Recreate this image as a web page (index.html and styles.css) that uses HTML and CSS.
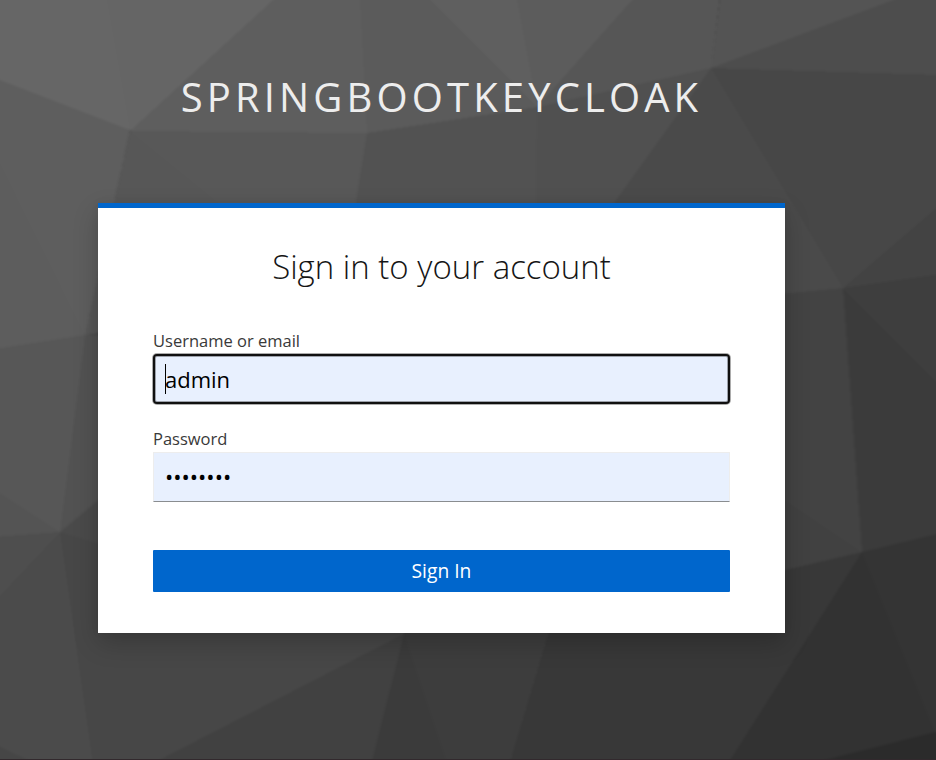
FILE: index.html
```html
<!DOCTYPE html>
<html lang="en">
<head>
<meta charset="utf-8">
<title>Sign in to SpringBootKeycloak</title>
<link rel="stylesheet" href="styles.css">
</head>
<body>
<svg class="backdrop" viewBox="0 0 936 760" preserveAspectRatio="none" aria-hidden="true">
  <rect width="936" height="760" fill="#484848"/>
  <g class="facets">
  <!-- upper row -->
  <path fill="#656565" d="M106 -5H300L134 134L130 130Z"/>
  <path fill="#666" d="M0 -5H106L130 130L0 80H-5V-5Z"/>
  <path fill="#5e5e5e" d="M273 0L278 -5H360L367 133L130 131Z"/>
  <path fill="#5b5b5b" d="M360 0V-5H425L430 0L537 107L367 133Z"/>
  <path fill="#5f5f5f" d="M430 0L425 -5H517L537 107Z"/>
  <path fill="#5c5c5c" d="M517 0V-5H637L632 0L537 107Z"/>
  <path fill="#565656" d="M632 0L637 -5H720L711 68L537 107Z"/>
  <path fill="#545454" d="M720 0V-5H906L893 0L711 68Z"/>
  <path fill="#4d4d4d" d="M893 0L906 -5H941V75L711 68Z"/>
  <path fill="#474747" d="M711 68L941 75V204L843 288Z"/>
  <path fill="#4a4a4a" d="M711 68L843 288L785 294H540L614 203Z"/>
  <path fill="#505050" d="M537 107L711 68L614 203L560 280H534Z"/>
  <path fill="#525252" d="M367 133L537 107L534 300H340Z"/>
  <path fill="#585858" d="M130 131L367 133L340 300L215 200Z"/>
  <path fill="#575757" d="M130 131L215 200L340 300L85 335Z"/>
  <!-- left side -->
  <path fill="#5e5e5e" d="M-5 78L0 80L130 130L85 335L-5 153Z"/>
  <path fill="#5d5d5d" d="M-5 153L85 335L-5 349Z"/>
  <path fill="#575757" d="M-5 349L85 335L60 532L-5 490Z"/>
  <path fill="#525252" d="M85 335H120V482L60 532Z"/>
  <path fill="#545454" d="M-5 490L60 532L-5 537Z"/>
  <path fill="#4e4e4e" d="M-5 537L60 532L-5 601Z"/>
  <path fill="#4b4b4b" d="M-5 601L60 532L93 765H38L-5 744Z"/>
  <path fill="#464646" d="M-5 744L38 765H-5Z"/>
  <path fill="#4a4a4a" d="M60 532L120 482V552Z"/>
  <path fill="#474747" d="M60 532L404 634L150 765H93Z"/>
  <!-- right side -->
  <path fill="#434343" d="M843 288L941 204V274Z"/>
  <path fill="#3e3e3e" d="M843 288L941 274V387Z"/>
  <path fill="#3b3b3b" d="M843 288L941 387V533L862 552Z"/>
  <path fill="#434343" d="M780 294L843 288L862 552L780 497Z"/>
  <path fill="#414141" d="M780 497L862 552L780 572Z"/>
  <path fill="#343434" d="M862 552L941 533V731L935 732Z"/>
  <path fill="#323232" d="M862 552L935 732L805 765H727Z"/>
  <path fill="#2b2b2b" d="M805 765L935 732L941 731V765Z"/>
  <!-- lower row -->
  <path fill="#414141" d="M150 765L404 634L371 765Z"/>
  <path fill="#3b3b3b" d="M404 634L371 765H448Z"/>
  <path fill="#3d3d3d" d="M404 634V620H552L509 765H448Z"/>
  <path fill="#383838" d="M570 560L785 570L862 552L727 765H509Z"/>
  </g>
  <path fill="#32292d" d="M0 759H936V760H0Z"/>
</svg>
<div class="page">
  <header class="realm">SpringBootKeycloak</header>
  <main class="card">
    <h1 class="title">Sign in to your account</h1>
    <form class="form">
      <label class="label" for="username">Username or email</label>
      <div class="field">
        <input class="input focused" id="username" type="text" value="admin">
        <span class="caret"></span>
      </div>
      <label class="label" for="password">Password</label>
      <input class="input masked" id="password" type="password" value="password">
      <button class="submit" type="button">Sign In</button>
    </form>
  </main>
</div>
</body>
</html>
```

FILE: styles.css
```css
* { box-sizing: border-box; }

body {
  margin: 0;
  height: 760px;
  overflow: hidden;
  background: #484848;
  font-family: "Open Sans", sans-serif;
}

.backdrop {
  position: absolute;
  inset: 0;
  z-index: -1;
  width: 936px;
  height: 760px;
}

.facets {
  shape-rendering: crispEdges;
  filter: blur(.8px);
}

.page {
  width: 687px;
  margin-left: 98px;
}

.realm {
  height: 203px;
  padding-top: 70px;
  color: #ededed;
  font-size: 40px;
  line-height: 54px;
  letter-spacing: 4.125px;
  text-align: center;
  text-transform: uppercase;
  white-space: nowrap;
}

.card {
  height: 430px;
  padding: 36px 55px 0;
  background: #fff;
  border-top: 5px solid #06c;
  box-shadow: 0 10px 24px rgba(3, 3, 3, .2), 0 0 8px rgba(3, 3, 3, .05);
}

.title {
  margin: 0;
  color: #151515;
  font-size: 33px;
  font-weight: 300;
  line-height: 46px;
  text-align: center;
}

.form {
  display: flex;
  flex-direction: column;
  padding-top: 39px;
}

.label {
  height: 25px;
  color: #393939;
  font-size: 16.5px;
  line-height: 23px;
}

.field {
  position: relative;
  height: 50px;
  margin-bottom: 23px;
}

.input {
  display: block;
  width: 100%;
  height: 50px;
  padding: 0 11px;
  border: 1px solid #ededed;
  border-bottom-color: #8a8d90;
  border-radius: 0;
  outline: none;
  background: #e8f0fe;
  color: #000;
  font: 22px "Open Sans", sans-serif;
}

.masked { padding-bottom: 2px; }

.focused {
  border: 2px solid #101010;
  border-radius: 4px;
  padding: 0 10px;
  box-shadow: 0 0 0 1px rgba(16, 16, 16, .35), inset 0 0 0 1px rgba(16, 16, 16, .35);
}

.caret {
  position: absolute;
  left: 12px;
  top: 10px;
  width: 1px;
  height: 30px;
  background: #000;
}

.submit {
  height: 42px;
  margin-top: 48px;
  padding: 0;
  border: 0;
  border-radius: 1px;
  background: #06c;
  color: #fff;
  font: 19.25px/42px "Open Sans", sans-serif;
}
```
